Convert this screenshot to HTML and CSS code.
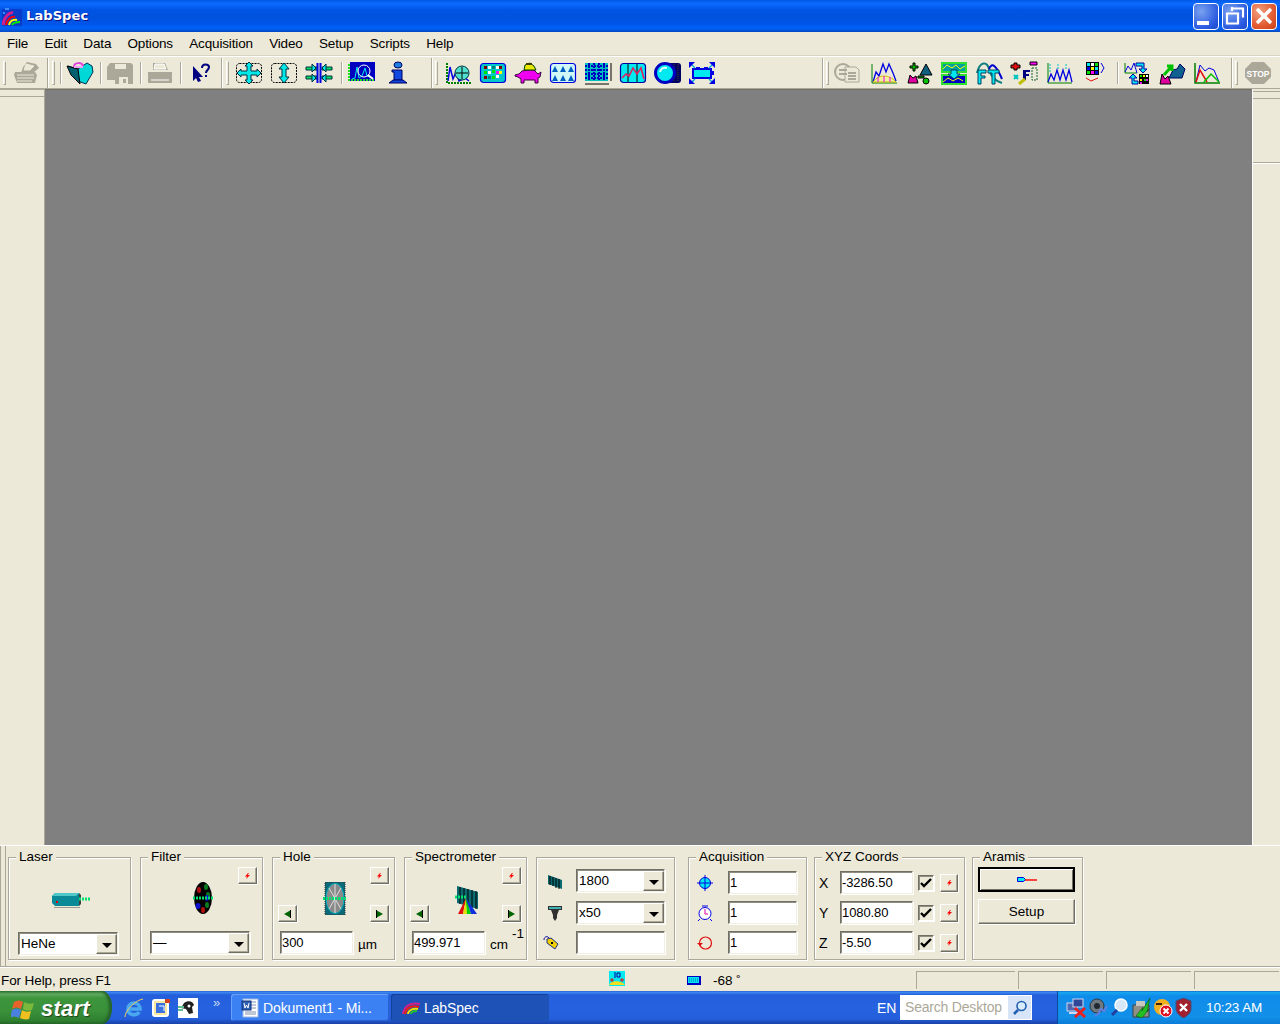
FILE: index.html
```html
<!DOCTYPE html>
<html lang="en">
<head>
<meta charset="utf-8">
<title>LabSpec</title>
<link rel="stylesheet" href="styles.css">
</head>
<body>
<svg class="defs" width="0" height="0" aria-hidden="true">
  <symbol id="bolt" viewBox="0 0 5 6"><path d="M3 0h1L2.500 2H5L1 6l1-2.500H0z" fill="#f00"/></symbol>
  <symbol id="tri-l" viewBox="0 0 7 8"><path d="M7 0v8L0 4z" fill="#006400"/><path d="M6.500 0v8" stroke="#000" fill="none"/></symbol>
  <symbol id="tri-r" viewBox="0 0 7 8"><path d="M0 0v8l7-4z" fill="#006400"/><path d="M.5 0v8" stroke="#000" fill="none"/></symbol>
</svg>

<header class="titlebar">
  <svg class="app-icon" width="20" height="18" viewBox="0 0 20 18"><rect x="0" y="1" width="20" height="17" fill="#0a3cc8"/><path d="M3 1h4M1 5h2" stroke="#3c8cff" stroke-width="2"/><path d="M1 17C2 8 8 4 11 5" stroke="#d02090" stroke-width="3" fill="none"/><path d="M4 17C5 11 10 8 13 9" stroke="#f00" stroke-width="2" fill="none"/><path d="M7 17C8 13 11 11 15 12" stroke="#ff0" stroke-width="2" fill="none"/><path d="M10 17c1-2 3-3 8-3" stroke="#0e0" stroke-width="2" fill="none"/></svg>
  <span class="app-title">LabSpec</span>
  <div class="win-buttons">
    <div class="win-btn"><span class="g-min"></span></div>
    <div class="win-btn"><svg width="20" height="20" viewBox="0 0 20 20" fill="none" stroke="#fff"><path d="M7 2.500h11v9M7 1v4M2 7.500h11v10H2z" stroke-width="2.200"/></svg></div>
    <div class="win-btn win-close"><svg width="18" height="18" viewBox="0 0 18 18"><path d="M2 2l14 14M16 2L2 16" stroke="#fff" stroke-width="3.400"/></svg></div>
  </div>
</header>

<nav class="menubar">
  <span>File</span><span>Edit</span><span>Data</span><span>Options</span><span>Acquisition</span><span>Video</span><span>Setup</span><span>Scripts</span><span>Help</span>
</nav>

<div class="toolbar">
  <i class="grip ml3"></i>
  <svg class="ti ml6" viewBox="0 0 28 24"><path d="M15 1l9 2 3 4-6 5H9l2-6z" fill="#aca899"/><path d="M3 11h20l2 3-2 8H5l-3-8z" fill="#aca899"/><path d="M14 3l8 2-4 4h-6zM5 14h17M5 17h17M5 20h15" stroke="#ece9d8" fill="#ece9d8"/></svg>
  <i class="bandend ml7"></i><i class="grip ml4"></i><i class="sep ml5"></i>
  <svg class="ti ml5" viewBox="0 0 28 24"><path d="M2 5l10 3 9-6 5 3 1 6-7 12-8-3z" fill="#00d8d8" stroke="#003050"/><path d="M1 5l4 9 9 9-2-15z" fill="#006070" stroke="#000"/><path d="M8 6c0-5 8-5 9-1" stroke="#e040e0" stroke-width="2" fill="none"/><path d="M8 6h9" stroke="#f0a0f0" stroke-width="2"/></svg>
  <i class="sep ml6"></i>
  <svg class="ti ml5" viewBox="0 0 28 24"><path d="M4 2h21l2 2v19H9v-4H1V6z" fill="#aca899"/><path d="M9 3h11v5H9z" fill="#ece9d8"/><path d="M13 16h9v7h-9z" fill="#ece9d8"/><path d="M17 18h3v4h-3z" fill="#aca899"/></svg>
  <i class="sep ml6"></i>
  <svg class="ti ml5" viewBox="0 0 28 24"><path d="M7 2h12l3 7h-15zM2 11h24v11H2z" fill="#aca899"/><path d="M9 3h9l2 5H8zM5 19h18" stroke="#fff" fill="#ece9d8"/></svg>
  <i class="sep ml6"></i>
  <svg class="ti ml6" viewBox="0 0 28 24"><path d="M6 5v15l3-3 2 4 3-1-2-4h4z" fill="#000080"/><path d="M15 7c0-5 7-4 7-1 0 3-3 3-3 6M19 14v2" stroke="#000080" stroke-width="2" fill="none"/></svg>
  <i class="bandend ml6"></i><i class="grip ml4"></i>
  <svg class="ti ml6" viewBox="0 0 28 24"><rect x="1.500" y="2.500" width="25" height="19" rx="3" fill="none" stroke="#000" stroke-dasharray="2 1"/><path d="M14 1l4 4h-2v5h6V8l4 4-4 4v-2h-6v5h2l-4 4-4-4h2v-5H6v2l-4-4 4-4v2h6V5h-2z" fill="#00e8e8" stroke="#003040"/></svg>
  <svg class="ti ml7" viewBox="0 0 28 24"><rect x="1.500" y="2.500" width="25" height="19" rx="3" fill="none" stroke="#000" stroke-dasharray="2 1"/><path d="M14 2l5 6h-3v8h3l-5 6-5-6h3V8H9z" fill="#00e8e8" stroke="#003040"/></svg>
  <svg class="ti ml7" viewBox="0 0 28 24"><path d="M1 6h11v3H1zM17 6h10v3H17zM1 15h11v3H1zM17 15h10v3H17z" fill="#00e060" stroke="#003040"/><path d="M12.500 2v20M15.500 2v20" stroke="#0000e0" stroke-width="2"/><path d="M21 3l-4 4 4 4zM7 3l4 4-4 4zM21 13l-4 4 4 4zM7 13l4 4-4 4z" fill="#00e8e8" stroke="#003040"/></svg>
  <i class="sep ml8"></i>
  <svg class="ti ml6" viewBox="0 0 28 24"><rect x="2" y="1" width="25" height="19" fill="#0000c0"/><path d="M0 19h27M1 3v17" stroke="#20e020" stroke-width="2" stroke-dasharray="2 1"/><path d="M4 18l3-1 2-11 2 11 3-2 3-8 2 8 6 2" stroke="#00e8e8" fill="none"/><circle cx="16" cy="10" r="6" fill="none" stroke="#fff"/><path d="M20 14l5 4" stroke="#fff" stroke-width="2"/></svg>
  <svg class="ti ml8" viewBox="0 0 28 24"><ellipse cx="14" cy="4" rx="4" ry="3" fill="#2080e0" stroke="#000060"/><path d="M8 9h10v10h-8v-8H8z" fill="#1048e0" stroke="#000060"/><path d="M5 22l4-3h10l4 3z" fill="#1048e0" stroke="#000060"/></svg>
  <i class="bandend ml19"></i><i class="grip ml3"></i>
  <svg class="ti ml6" viewBox="0 0 28 24"><path d="M3 2v20h24" stroke="#008000" stroke-width="2" fill="none" stroke-dasharray="2 1"/><path d="M4 20l2-14 3 12 3-7 3 9 6-3 4 3" stroke="#0000e0" fill="none" stroke-width="1.500"/><circle cx="18" cy="12" r="7" fill="#50e0d0" stroke="#003040"/><path d="M18 6v12M12 12h12" stroke="#000"/></svg>
  <svg class="ti ml7" viewBox="0 0 28 24"><rect x="1.500" y="2.500" width="25" height="19" rx="3" fill="#00c8c8" stroke="#0000e0" stroke-width="1.200"/><path d="M5 5h3v3H5zM20 5h3v3h-3zM5 15h3v3H5z" fill="#800000"/><path d="M9 5h3v3H9zM9 10h3v3H9zM17 14h3v3h-3zM17 5h3v3h-3z" fill="#fff"/><path d="M13 9h3v3h-3zM5 10h3v3H5zM13 15h3v3h-3z" fill="#00e000"/><path d="M13 5h3v3h-3zM9 15h3v3H9z" fill="#008080"/><path d="M17 10h3v3h-3z" fill="#ff00ff"/><path d="M20 10h3v3h-3z" fill="#ff0"/></svg>
  <svg class="ti ml7" viewBox="0 0 28 24"><path d="M1 14l4-1 3-3 6-1 6 0 4 4 3-2-1 5-2 1v5h-3v-3H10v3H7v-4l-3-2-3-1z" fill="#f000f0" stroke="#400040"/><path d="M10 9l1-5 5-2 4 3 2 4z" fill="#e8e800" stroke="#004000"/><path d="M12 3h6" stroke="#404000" stroke-width="2"/></svg>
  <svg class="ti ml7" viewBox="0 0 28 24"><rect x="1.500" y="2.500" width="25" height="19" rx="3" fill="#d0f8f8" stroke="#0000e0" stroke-width="1.200"/><path d="M3 11l3-6 3 6zM11 11l3-6 3 6zM19 11l3-6 3 6zM3 20l3-6 3 6zM11 20l3-6 3 6zM19 20l3-6 3 6z" fill="#0060c0"/></svg>
  <svg class="ti ml7" viewBox="0 0 28 24"><rect x="1" y="2" width="23" height="18" fill="#00c0c0"/><path d="M1 5h23M1 9h23M1 13h23M1 17h23M5 2v18M10 2v18M15 2v18M20 2v18" stroke="#0000c0" stroke-width="2" stroke-dasharray="2 1"/><path d="M27 2v18M1 23h24" stroke="#000"/></svg>
  <svg class="ti ml7" viewBox="0 0 28 24"><rect x="1.500" y="2.500" width="25" height="19" rx="3" fill="#00e8f0" stroke="#0000a0" stroke-width="1.200"/><path d="M9 3v18M18 3v18" stroke="#000"/><path d="M3 17l4-4 3 2 4-8 4 6 4-6 3 11" fill="none" stroke="#e02060" stroke-width="1.600"/></svg>
  <svg class="ti ml7" viewBox="0 0 28 24"><rect x="12" y="2" width="15" height="20" rx="3" fill="#000060"/><path d="M16 3v18M20 3v18M24 3v18" stroke="#404040" stroke-dasharray="1 1"/><circle cx="11" cy="12" r="9.500" fill="#00e8f0" stroke="#0000c0" stroke-width="3"/><path d="M6 11c1-4 4-5 7-4" stroke="#e0ffff" stroke-width="2" fill="none"/></svg>
  <svg class="ti ml6" viewBox="0 0 28 24"><path d="M5 8h18v9H5z" fill="#00e8f0" stroke="#0000e0" stroke-width="2"/><path d="M8 6h4v3H8zM16 6h4v3h-4zM23 10h3v4h-3z" fill="#0000e0"/><path d="M7 7L3 3M21 7l4-4M7 18l-4 4M21 18l4 4" stroke="#00b0d0" stroke-width="1.400"/><path d="M1 1h6L1 7zM27 1h-6l6 6zM1 23h6l-6-6zM27 23h-6l6-6z" fill="#0000e0"/></svg>
  <i class="bandend ml106"></i><i class="grip ml3"></i>
  <svg class="ti ml4" viewBox="0 0 28 24"><circle cx="10" cy="11" r="8" fill="#ece9d8" stroke="#aca899" stroke-width="2"/><path d="M12 6h11l3 3v12H12z" fill="#ece9d8" stroke="#aca899"/><path d="M6 9h8M6 13h8M15 12h8M15 15h8M15 18h8" stroke="#aca899" stroke-width="2"/></svg>
  <svg class="ti ml9" viewBox="0 0 28 24"><path d="M2 3v19h25" stroke="#008000" fill="none"/><path d="M3 21l3-10 3 4 4-12 3 8 3-8 4 9 3 8" stroke="#0000e0" fill="none" stroke-width="1.300"/><path d="M3 21c6-8 16-8 23 0z" fill="#f0f0a0" stroke="#d0c000"/><path d="M8 16v5M14 15v6M20 16v5" stroke="#f000f0"/></svg>
  <svg class="ti ml7" viewBox="0 0 28 24"><path d="M3 22l2-8 3 3 3-2 2 7z" fill="#e000a0" stroke="#000"/><path d="M15 14l6-11 6 11z" fill="#106080" stroke="#000"/><path d="M8 2h2v3h3v2h-3v3H8V7H5V5h3z" fill="#00c000" stroke="#000"/><path d="M13 15h6v2h-6z" fill="#00a000" stroke="#000"/><circle cx="21" cy="20" r="3" fill="#00c000" stroke="#000"/></svg>
  <svg class="ti ml7" viewBox="0 0 28 24"><rect x="2" y="2" width="24" height="9" fill="#00a0a0" stroke="#30e030" stroke-width="2"/><rect x="2" y="14" width="24" height="9" fill="#0000c0" stroke="#30e030" stroke-width="2"/><path d="M3 8l4-4 5 3 4-3 4 4 5-3M3 21l5-4 5 3 5-3 5 3" stroke="#ff0" fill="none"/><path d="M11 9h6v4h3l-6 5-6-5h3z" fill="#00e8f0" stroke="#004060"/></svg>
  <svg class="ti ml7" viewBox="0 0 28 24"><path d="M2 12C5 0 12 0 14 8s6 12 13 14" stroke="#108080" stroke-width="2" fill="none"/><path d="M14 8C17 0 22 6 27 18" stroke="#0000d0" stroke-width="2" fill="none"/><path d="M3 9h8v3H6v3h4v2H6v6H3zM13 9h11v3h-4v11h-3V12h-4z" fill="#00e8f0" stroke="#004060"/></svg>
  <svg class="ti ml7" viewBox="0 0 28 24"><path d="M4 2h3v2h3v3H7v2H4V7H1V4h3z" fill="#e01010" stroke="#000"/><path d="M20 1h7v3h-7z" fill="#ff00ff" stroke="#000"/><path d="M13 9h7v2h-4v2h3v2h-3v4h-3z" fill="#000080"/><path d="M4 14l4 4m0-4l-4 4" stroke="#00c0c0" stroke-width="2"/><path d="M22 7h5v12h-5z" fill="none" stroke="#106030" stroke-dasharray="2 1"/><path d="M9 23l6-5" stroke="#c0c000" stroke-width="3"/></svg>
  <svg class="ti ml7" viewBox="0 0 28 24"><path d="M3 2v20h24" stroke="#008000" fill="none"/><path d="M3 21l3-8 3 6 3-10 3 10 3-10 3 10 3-10 3 12" stroke="#0000e0" fill="none" stroke-width="1.300"/><path d="M5 3v8M13 3v5M21 3v5" stroke="#00c0c0" stroke-dasharray="2 1"/></svg>
  <svg class="ti ml7" viewBox="0 0 28 24"><rect x="6" y="1" width="13" height="13" fill="#000"/><path d="M7 2h3v3H7zM15 6h3v3h-3z" fill="#00e8f0"/><path d="M11 2h3v3h-3z" fill="#fff"/><path d="M15 2h3v3h-3zM7 10h3v3H7z" fill="#00e000"/><path d="M11 6h3v3h-3z" fill="#ff0"/><path d="M7 6h3v3H7zM15 10h3v3h-3z" fill="#0000e0"/><path d="M11 10h3v3h-3z" fill="#ff00ff"/><path d="M21 2l3 5-3 5" stroke="#0000e0" fill="none"/><path d="M6 17l5 3 7-3" stroke="#e01010" fill="none"/></svg>
  <i class="sep ml9"></i>
  <svg class="ti ml5" viewBox="0 0 28 24"><path d="M2 2v10h12" stroke="#008000" fill="none"/><path d="M2 11l3-6 3 4 3-7 3 10" stroke="#0000e0" fill="none"/><path d="M13 2h8v6h3l-4 4-4-4h3V5h-6z" fill="#00e8f0" stroke="#0000a0"/><path d="M9 23v-6H6l4-4 4 4h-3v3h4v3z" fill="#00e8f0" stroke="#0000a0"/><rect x="16" y="13" width="10" height="10" fill="#000"/><path d="M17 14h2v2h-2zM21 18h2v2h-2z" fill="#00e000"/><path d="M20 14h2v2h-2zM17 18h2v2h-2z" fill="#ff0"/><path d="M23 14h2v2h-2z" fill="#fff"/><path d="M17 21h2v2h-2zM23 18h2v2h-2z" fill="#e020e0"/></svg>
  <svg class="ti ml7" viewBox="0 0 28 24"><path d="M2 23l2-10 3 5 3-3 3 8z" fill="#e000a0" stroke="#000"/><path d="M11 17l4-8 4-1 3-5 5 5-3 9z" fill="#106090" stroke="#000060"/><path d="M6 14l7-8M9 5h5v5" stroke="#00c000" stroke-width="3" fill="none"/></svg>
  <svg class="ti ml7" viewBox="0 0 28 24"><path d="M2 2v20h25" stroke="#008000" stroke-width="1.500" fill="none"/><path d="M3 21L7 4l5 6 4-3 5 2 5 12" stroke="#0000e0" fill="none"/><path d="M3 21l4-12 7 12" stroke="#e01010" fill="none" stroke-width="1.500"/><path d="M11 21l7-8 8 8" stroke="#00c000" fill="none" stroke-width="1.500"/></svg>
  <i class="bandend ml10"></i><i class="grip ml3"></i>
  <svg class="ti ml6" viewBox="0 0 28 24"><path d="M8 1h12l7 7v8l-7 7H8l-7-7V8z" fill="#aca899"/><text x="14" y="15.500" class="stop-text">STOP</text></svg>
</div>

<main class="workspace">
  <aside class="dock dock-left"></aside>
  <section class="canvas"></section>
  <aside class="dock dock-right"><div class="dock-divider"></div></aside>
</main>

<section class="panel">
  <div class="group g-laser">
    <span class="legend">Laser</span>
    <div class="icon-row">
      <svg width="40" height="18" viewBox="0 0 40 18"><path d="M1 5l3-3h24v13H4l-3-3z" fill="#0a8a96"/><path d="M1 5l3-3h24l-3 3z" fill="#50c8c8"/><path d="M4 15h24l2-2v-9l-2-2v13z" fill="#404040"/><path d="M3 16h26v1H3z" fill="#9c9a90"/><rect x="5" y="10" width="2" height="2" fill="#e00000"/><path d="M28 8h12" stroke="#00e070" stroke-width="3" stroke-dasharray="2 1"/></svg>
    </div>
    <div class="select"><span class="value">HeNe</span><span class="drop"></span></div>
  </div>

  <div class="group optic g-filter">
    <span class="legend">Filter</span>
    <span class="slot-l"></span>
    <button class="btn-sq slot-top"><svg class="bolt"><use href="#bolt"/></svg></button>
    <svg class="optic-icon" width="20" height="34" viewBox="0 0 20 34"><ellipse cx="10" cy="17" rx="9" ry="16" fill="#000"/><ellipse cx="6" cy="9" rx="2" ry="3" fill="#b01010"/><ellipse cx="13" cy="6" rx="2" ry="3" fill="#0a7a20"/><ellipse cx="15" cy="14" rx="2" ry="3" fill="#0a7a20"/><ellipse cx="5" cy="25" rx="2.500" ry="3" fill="#1010d0"/><ellipse cx="14" cy="24" rx="2" ry="3" fill="#0a7a20"/><ellipse cx="10" cy="29" rx="2" ry="3" fill="#b01010"/><ellipse cx="14" cy="17" rx="2" ry="3" fill="#1010d0"/><path d="M0 17h20" stroke="#00e070" stroke-width="3" stroke-dasharray="2 1"/></svg>
    <div class="select row-bottom"><span class="value">—</span><span class="drop"></span></div>
  </div>

  <div class="group optic g-hole">
    <span class="legend">Hole</span>
    <button class="btn-sq slot-top"><svg class="bolt"><use href="#bolt"/></svg></button>
    <button class="btn-sq slot-l"><svg class="tri"><use href="#tri-l"/></svg></button>
    <svg class="optic-icon" width="24" height="33" viewBox="0 0 24 33"><rect x="2" y="0" width="20" height="33" fill="#0c6a78"/><path d="M2 0h20v33H2z" fill="none" stroke="#303030" stroke-dasharray="1 1"/><ellipse cx="12" cy="16.500" rx="9" ry="15" fill="#8a8a8a" stroke="#00b0c0"/><path d="M12 2v29M6 6l12 21M18 6L6 27" stroke="#e0e0e0"/><path d="M0 16.500h24" stroke="#00e070" stroke-width="3" stroke-dasharray="2 1"/></svg>
    <button class="btn-sq slot-r"><svg class="tri"><use href="#tri-r"/></svg></button>
    <div class="entry-row row-bottom"><div class="field w73">300</div><span class="unit">µm</span></div>
  </div>

  <div class="group optic g-spec">
    <span class="legend">Spectrometer</span>
    <button class="btn-sq slot-top"><svg class="bolt"><use href="#bolt"/></svg></button>
    <button class="btn-sq slot-l"><svg class="tri"><use href="#tri-l"/></svg></button>
    <svg class="optic-icon" width="24" height="30" viewBox="0 0 24 30"><path d="M2 1l21 6v17L2 18z" fill="#0a6a70"/><path d="M5 2v17M9 3v17M13 4v18M17 5v18M21 6v18" stroke="#000"/><path d="M0 12h12" stroke="#00e070" stroke-width="3" stroke-dasharray="2 1"/><path d="M11 13L3 29h5z" fill="#e01010"/><path d="M11 13L8 29h4z" fill="#e0e000"/><path d="M11 13l1 16h4z" fill="#00d000"/><path d="M11 13l5 16h6z" fill="#1030e0"/></svg>
    <button class="btn-sq slot-r"><svg class="tri"><use href="#tri-r"/></svg></button>
    <div class="entry-row row-bottom"><div class="field w73">499.971</div><span class="unit unit-cm">cm</span><span class="sup">-1</span></div>
  </div>

  <div class="group rows g-instr">
    <div class="row-a">
      <svg class="row-icon" width="16" height="16" viewBox="0 0 16 16"><path d="M1 2l14 5v9L1 11z" fill="#0a6a70"/><path d="M3 3v9M6 4v9M9 5v10M12 6v10" stroke="#000"/></svg>
      <div class="select w89"><span class="value">1800</span><span class="drop"></span></div>
    </div>
    <div class="row-b">
      <svg class="row-icon" width="16" height="16" viewBox="0 0 16 16"><path d="M1 1h14v4h-3l-2 5v3l-2 3-2-3v-3L4 5H1z" fill="#303030"/><path d="M2 2h12v2H2z" fill="#40b0b0"/></svg>
      <div class="select w89"><span class="value">x50</span><span class="drop"></span></div>
    </div>
    <div class="row-c">
      <svg class="row-icon" width="16" height="16" viewBox="0 0 16 16"><path d="M4 4l4-1 7 6-3 5-8-6z" fill="#f0d000" stroke="#203080"/><path d="M1 5c0-4 4-4 5-2" fill="none" stroke="#0000a0"/><rect x="8" y="7" width="2" height="2" fill="#000"/></svg>
      <div class="field w89"></div>
    </div>
  </div>

  <div class="group rows g-acq">
    <span class="legend">Acquisition</span>
    <div class="row-a">
      <svg class="row-icon" width="16" height="16" viewBox="0 0 16 16"><circle cx="8" cy="8" r="5.500" fill="#00e8f0" stroke="#0000e0"/><path d="M8 0v16M0 8h16" stroke="#0000e0"/></svg>
      <div class="field w69">1</div>
    </div>
    <div class="row-b">
      <svg class="row-icon" width="16" height="16" viewBox="0 0 16 16"><circle cx="8" cy="8.500" r="6" fill="#fff" stroke="#0000e0"/><path d="M8 4v5h3" stroke="#e000a0" fill="none"/><path d="M5 1h6M3 14l-2 2M13 14l2 2" stroke="#0000e0"/></svg>
      <div class="field w69">1</div>
    </div>
    <div class="row-c">
      <svg class="row-icon" width="16" height="16" viewBox="0 0 16 16"><circle cx="8.500" cy="8" r="6" fill="none" stroke="#e01010" stroke-width="1.200"/><path d="M0 8h6l-3 3z" fill="#e01010"/></svg>
      <div class="field w69">1</div>
    </div>
  </div>

  <div class="group rows g-xyz">
    <span class="legend">XYZ Coords</span>
    <div class="row-a"><span class="axis">X</span><div class="field w73">-3286.50</div><span class="check"><svg width="12" height="12" viewBox="0 0 12 12"><path d="M1 6l3 3 7-7" stroke="#000" stroke-width="2.400" fill="none"/></svg></span><button class="btn-sq"><svg class="bolt"><use href="#bolt"/></svg></button></div>
    <div class="row-b"><span class="axis">Y</span><div class="field w73">1080.80</div><span class="check"><svg width="12" height="12" viewBox="0 0 12 12"><path d="M1 6l3 3 7-7" stroke="#000" stroke-width="2.400" fill="none"/></svg></span><button class="btn-sq"><svg class="bolt"><use href="#bolt"/></svg></button></div>
    <div class="row-c"><span class="axis">Z</span><div class="field w73">-5.50</div><span class="check"><svg width="12" height="12" viewBox="0 0 12 12"><path d="M1 6l3 3 7-7" stroke="#000" stroke-width="2.400" fill="none"/></svg></span><button class="btn-sq"><svg class="bolt"><use href="#bolt"/></svg></button></div>
  </div>

  <div class="group g-aramis">
    <span class="legend">Aramis</span>
    <button class="btn-wide btn-default"><svg width="20" height="6" viewBox="0 0 20 6"><path d="M.5.500h6l2 2-2 2h-6z" fill="#00e8f0" stroke="#0000e0"/><path d="M8 3h12" stroke="#f00" stroke-width="1.400"/></svg></button>
    <button class="btn-wide">Setup</button>
  </div>
</section>

<footer class="statusbar">
  <span class="help-text">For Help, press F1</span>
  <svg class="st-icon" width="16" height="15" viewBox="0 0 16 15"><rect width="16" height="15" fill="#00e8f0"/><path d="M0 14c2-5 12-5 16 0z" fill="#f0e020"/><path d="M3 7v4M1 9h4M13 7v4M11 9h4" stroke="#e01010"/><path d="M6 1v6M8 2h3v4H8z" stroke="#0000a0" fill="none"/></svg>
  <svg class="st-key" width="14" height="9" viewBox="0 0 14 9"><rect width="14" height="9" fill="#0000c0"/><rect x="1" y="1" width="11" height="6" fill="#00e8f0"/><path d="M2 3h9M2 5h9" stroke="#0060c0" stroke-dasharray="1 1"/></svg>
  <span class="angle">-68 ˚</span>
  <span class="pane p1"></span><span class="pane p2"></span><span class="pane p2"></span><span class="pane p3"></span>
</footer>

<div class="taskbar">
  <div class="start">
    <svg width="25" height="24" viewBox="0 0 25 24"><path d="M3 5c3-2 6-2 9 0l-2 7c-3-2-6-2-9 0z" fill="#e8622c"/><path d="M13 5c3 2 6 2 10 1l-2 7c-3 1-7 1-9-1z" fill="#7cb83c"/><path d="M1 13c3-2 6-2 9 0l-2 8c-3-2-6-2-9 0z" fill="#4a80e0"/><path d="M11 13c3 2 6 2 9 1l-2 8c-3 1-7 0-9-1z" fill="#f0c020"/></svg>
    <span class="start-text">start</span>
  </div>
  <div class="quick">
    <svg width="20" height="20" viewBox="0 0 20 20"><path d="M4 11h12c0-8-12-8-12 0 0 7 9 7 11 3" fill="none" stroke="#4aa8f0" stroke-width="3.600"/><path d="M1 19C1 12 12 2 19 1" fill="none" stroke="#f0d060"/></svg>
    <svg width="20" height="20" viewBox="0 0 20 20"><rect x="2" y="2" width="15" height="16" rx="2" fill="#f8e8a0" stroke="#fff" stroke-width="2"/><rect x="5" y="5" width="9" height="10" fill="#3a70e0"/><path d="M8 8h5v5" stroke="#fff" fill="none"/><path d="M14 1h5v4h-5z" fill="#d04020"/></svg>
    <svg width="20" height="20" viewBox="0 0 20 20"><rect width="20" height="20" fill="#fff"/><path d="M6 5c4-3 9-2 10 2l-2 2 1 6-4 1-3-5-5-1z" fill="#202020"/><path d="M0 9h6M0 12h5" stroke="#60c090" stroke-width="2"/><circle cx="11" cy="8" r="1.500" fill="#fff"/></svg>
    <span class="chev">»</span>
  </div>
  <div class="task">
    <svg width="20" height="20" viewBox="0 0 20 20"><rect x="2" y="1" width="15" height="18" fill="#fff" stroke="#9cb8e0"/><path d="M9 4h6M9 7h6M9 10h6M4 14h11M4 16h11" stroke="#8090b0"/><rect x="1" y="3" width="9" height="9" fill="#3060b0" stroke="#103080"/><path d="M3 5l1 5 1.500-3L7 10l1-5" stroke="#fff" fill="none"/></svg>
    <span>Dokument1 - Mi...</span>
  </div>
  <div class="task task-active">
    <svg width="20" height="14" viewBox="0 0 20 14"><path d="M1 13C2 5 8 1 18 3" stroke="#d02090" stroke-width="2" fill="none"/><path d="M3 13C4 7 9 4 17 6" stroke="#f02010" stroke-width="2" fill="none"/><path d="M6 13C6 10 10 7 16 8" stroke="#f0e000" stroke-width="2" fill="none"/><path d="M9 13c0-2 3-3 6-3" stroke="#20c030" stroke-width="2" fill="none"/></svg>
    <span>LabSpec</span>
  </div>
  <span class="lang">EN</span>
  <div class="search"><span>Search Desktop</span></div>
  <div class="search-go"><svg width="18" height="18" viewBox="0 0 18 18"><circle cx="10.500" cy="7" r="4.500" fill="#d8ecff" stroke="#2060b0" stroke-width="1.600"/><path d="M7 11l-4 4" stroke="#2060b0" stroke-width="2.600"/></svg></div>
  <div class="tray">
    <svg width="21" height="20" viewBox="0 0 21 20"><rect x="1" y="5" width="10" height="8" fill="#5068b0" stroke="#d0d8f0"/><rect x="7" y="1" width="10" height="8" fill="#304898" stroke="#d0d8f0"/><path d="M3 15h9" stroke="#d0d8f0" stroke-width="2"/><path d="M9 10l10 9m0-9L9 19" stroke="#e82020" stroke-width="3"/></svg>
    <svg width="19" height="20" viewBox="0 0 19 20"><circle cx="8" cy="8" r="7" fill="#707880" stroke="#303840"/><circle cx="8" cy="8" r="3" fill="#202830"/><path d="M6 18l4-3 2-4 3 2 3-5" stroke="#6080e0" stroke-width="2" fill="none"/></svg>
    <svg width="19" height="20" viewBox="0 0 19 20"><circle cx="11" cy="7" r="6" fill="#d8e8f8" stroke="#f8fcff" stroke-width="1.600"/><path d="M7 12l-5 5" stroke="#2040a0" stroke-width="3"/></svg>
    <svg width="20" height="20" viewBox="0 0 20 20"><path d="M2 7h16v12H2z" fill="#909088" stroke="#404040"/><path d="M5 3h9v5H5z" fill="#c8c8c0"/><path d="M5 18L12 9l-1 4 8-13-3 14 2-3-7 9z" fill="#20c020" stroke="#004000" stroke-width=".5"/></svg>
    <svg width="20" height="20" viewBox="0 0 20 20"><circle cx="9" cy="9" r="8" fill="#f0b020"/><circle cx="13" cy="13" r="6" fill="#e01020" stroke="#fff"/><path d="M10.500 10.500l5 5m0-5l-5 5" stroke="#fff" stroke-width="2"/><path d="M3 6h6" stroke="#402000" stroke-width="2"/></svg>
    <svg width="17" height="20" viewBox="0 0 17 20"><path d="M8.500 0L16 3v8c0 4-4 7-7.500 9C5 18 1 15 1 11V3z" fill="#a02030" stroke="#405080"/><path d="M5 6l7 7m0-7l-7 7" stroke="#fff" stroke-width="2.400"/></svg>
    <span class="clock">10:23 AM</span>
  </div>
</div>
</body>
</html>
```
FILE: styles.css
```css
* { box-sizing: border-box; }
html, body { margin: 0; padding: 0; }
body {
  width: 1280px; height: 1024px; overflow: hidden;
  background: #ece9d8; color: #000;
  font: 13.5px/16px "Liberation Sans", Arial, sans-serif;
  display: flex; flex-direction: column;
}
.defs { position: absolute; }

/* title bar */
.titlebar {
  flex: 0 0 32px; display: flex; align-items: center; padding-left: 2px; color: #fff;
  background: linear-gradient(#0058e6 0, #0a63f0 2px, #0a6aff 4px, #0054e3 10px, #0052de 18px, #0055ea 24px, #0062f8 28px, #0258e0 30px, #0048c0 32px);
}
.app-icon { margin-right: 4px; margin-top: 1px; }
.app-title { font: bold 13px/16px "DejaVu Sans", sans-serif; letter-spacing: .1px; text-shadow: 1px 1px #0f1089; }
.win-buttons { margin-left: auto; display: flex; gap: 3px; padding-right: 3px; }
.win-btn {
  width: 26px; height: 27px; border: 1px solid #fff; border-radius: 4px;
  background: radial-gradient(circle at 30% 30%, #7aa2f0, #2a5ae0 70%, #1c49c8);
  display: flex; align-items: center; justify-content: center;
}
.g-min { width: 12px; height: 4px; background: #fff; margin: 14px 6px 0 0; }
.win-close { background: radial-gradient(circle at 30% 30%, #f0a080, #e25a30 60%, #c8401c); }

/* menu */
.menubar { flex: 0 0 24px; display: flex; gap: 16.250px; padding: 4px 0 0 7px; letter-spacing: -.15px; }

/* toolbar */
.toolbar {
  flex: 0 0 33px; display: flex; align-items: center;
  border-top: 1px solid #fff; border-bottom: 1px solid #aca899; background: #ece9d8;
  box-shadow: 0 -1px #d8d4c0;
}
.ti { width: 28px; height: 24px; flex: none; }
.grip { width: 3px; height: 24px; flex: none; border: 1px solid; border-color: #fff #aca899 #aca899 #fff; }
.sep { width: 1px; height: 22px; flex: none; background: #aca899; box-shadow: 1px 0 #fff; }
.bandend { width: 1px; height: 30px; flex: none; background: #aca899; box-shadow: 1px 0 #fff; }
.stop-text { font: bold 8.500px "Liberation Sans", sans-serif; fill: #fff; text-anchor: middle; }
.ml3 { margin-left: 3px; } .ml4 { margin-left: 4px; } .ml5 { margin-left: 5px; } .ml6 { margin-left: 6px; }
.ml7 { margin-left: 7px; } .ml8 { margin-left: 8px; } .ml9 { margin-left: 9px; } .ml10 { margin-left: 10px; }
.ml19 { margin-left: 19px; } .ml106 { margin-left: 106px; }

/* workspace */
.workspace { flex: 0 0 757px; display: flex; border-bottom: 1px solid #fff; }
.dock { background: #ece9d8; }
.dock-left { flex: 0 0 45px; border-right: 1px solid #aca899; }
.dock-left::before, .dock-right::before {
  content: ""; display: block; height: 6px;
  border-top: 1px solid #aca899; border-bottom: 1px solid #aca899;
}
.dock-right::before { margin-top: 2px; }
.canvas { flex: 0 0 1207px; background: #808080; border-top: 1px solid #716f64; }
.dock-right { flex: 0 0 28px; border-left: 1px solid #fff; }
.dock-divider { margin-top: 63px; height: 2px; border-top: 1px solid #aca899; border-bottom: 1px solid #fff; }

/* instrument panel */
.panel {
  flex: 0 0 121px; display: flex; align-items: flex-start; padding: 11px 0 0 8px; position: relative;
  border-bottom: 1px solid #aca899;
}
.panel::before {
  content: ""; position: absolute; left: 0; top: 0; bottom: 0; width: 4px;
  border-left: 1px solid #aca899; border-right: 1px solid #aca899;
}
.group {
  position: relative; flex: none; height: 103px; margin-right: 9px;
  border: 1px solid #aca899; box-shadow: 1px 1px #fff, inset 1px 1px #fff;
}
.legend { position: absolute; left: 7px; top: -9px; padding: 0 3px; background: #ece9d8; white-space: nowrap; }

.g-laser { width: 123px; display: flex; flex-direction: column; align-items: flex-start; padding: 33px 0 0 9px; }
.icon-row { height: 41px; margin-left: 33px; }
.g-filter, .g-hole, .g-spec { width: 123px; }

.optic {
  display: grid;
  grid-template-columns: 19px 73px 19px;
  grid-template-rows: 17px 21px 17px 9px 23px;
  padding: 9px 5px 0 5px;
}
.slot-top { grid-column: 3; grid-row: 1; }
.slot-l { grid-column: 1; grid-row: 3; }
.slot-r { grid-column: 3; grid-row: 3; }
.optic-icon { grid-column: 2; grid-row: 1 / 4; justify-self: center; align-self: end; margin: 0 0 7px 2px; }
.g-hole .optic-icon { margin-left: 3px; }
.row-bottom { grid-column: 1 / -1; grid-row: 5; }
.g-filter .select { margin-left: 4px; }
.entry-row { display: flex; align-items: flex-start; padding-left: 2px; position: relative; }
.unit { margin: 6px 0 0 5px; }
.sup { margin: -5px 0 0 4px; }

.rows { display: grid; align-content: start; padding-top: 13px; row-gap: 7px; }
.rows > div { display: flex; align-items: center; height: 23px; }
.row-icon { flex: none; }
.g-instr { width: 139px; margin-right: 13px; padding-top: 11px; row-gap: 0; }
.g-instr .row-a { padding-left: 10px; }
.g-instr .row-b { padding-left: 10px; margin-top: 9px; }
.g-instr .row-c { padding-left: 6px; margin-top: 7px; }
.g-instr .row-icon { margin-right: 13px; }
.g-instr .row-c .row-icon { margin-right: 17px; }
.g-acq { width: 119px; margin-right: 7px; padding-left: 8px; }
.g-acq .row-icon { margin-right: 15px; }
.g-xyz { width: 151px; margin-right: 7px; padding-left: 4px; }
.axis { width: 21px; flex: none; padding-top: 1px; font-size: 14px; }
.g-xyz .check { margin: 0 6px 0 5px; }
.g-aramis { width: 111px; display: flex; flex-direction: column; gap: 7px; padding: 9px 0 0 5px; margin-right: 0; }

.field {
  flex: none; height: 23px; background: #fff; padding: 3px 0 0 1px; line-height: 16px; font-size: 13px; letter-spacing: -.1px;
  border: 1px solid; border-color: #716f64 #f1efe2 #f1efe2 #716f64;
  box-shadow: inset 1px 1px #908e82, 1px 1px #fff;
}
.w73 { width: 73px; } .w69 { width: 69px; } .w89 { width: 89px; }
.select {
  flex: none; width: 100px; height: 23px; display: flex; background: #fff;
  border: 1px solid; border-color: #716f64 #f1efe2 #f1efe2 #716f64;
  box-shadow: inset 1px 1px #908e82, 1px 1px #fff; padding: 1px 0 0 1px;
}
.select.w89 { width: 89px; }
.value { flex: 1; padding: 2px 0 0 1px; }
.drop {
  flex: 0 0 21px; background: #ece9d8; position: relative;
  border: 1px solid; border-color: #fff #716f64 #716f64 #fff;
  box-shadow: inset -1px -1px #aca899;
}
.drop::after {
  content: ""; position: absolute; left: 5px; top: 8px;
  border: 5px solid transparent; border-top: 5px solid #000; border-bottom: 0;
}
.btn-sq {
  width: 19px; height: 17px; padding: 0; display: flex; align-items: center; justify-content: center;
  background: #ece9d8; flex: none;
  border: 1px solid; border-color: #fff #716f64 #716f64 #fff;
  box-shadow: inset -1px -1px #aca899, 1px 1px #fff;
}
.g-xyz .btn-sq { width: 18px; height: 18px; }
.bolt { width: 5px; height: 6px; }
.tri { width: 7px; height: 8px; }
.check {
  width: 16px; height: 16px; background: #ece9d8; flex: none; display: flex; align-items: center; justify-content: center;
  border: 1px solid; border-color: #716f64 #fff #fff #716f64; box-shadow: inset 1px 1px #908e82, 1px 1px #fff;
}
.btn-wide {
  width: 97px; height: 25px; padding: 0; background: #ece9d8; color: #000;
  font: 13.5px/16px "Liberation Sans", Arial, sans-serif;
  border: 1px solid; border-color: #fff #716f64 #716f64 #fff;
  box-shadow: inset -1px -1px #aca899, 1px 1px #fff;
  display: flex; align-items: center; justify-content: center;
}
.btn-default { border: 2px solid #000; box-shadow: inset 1px 1px #fff, inset -1px -1px #716f64; }

/* status */
.statusbar { flex: 0 0 24px; display: flex; align-items: flex-start; border-top: 1px solid #fff; position: relative; }
.help-text { width: 609px; padding: 5px 0 0 1px; flex: none; letter-spacing: -.1px; }
.st-icon { margin-top: 3px; flex: none; }
.st-key { margin: 8px 0 0 62px; flex: none; }
.angle { margin: 5px 0 0 12px; width: 203px; flex: none; }
.pane { height: 18px; margin-top: 3px; flex: none; border-top: 1px solid #aca899; border-left: 1px solid #aca899; margin-right: 3px; }
.p1 { width: 99px; } .p2 { width: 85px; } .p3 { width: 85px; margin-right: 0; }

/* taskbar */
.taskbar {
  flex: 1; display: flex; align-items: center; color: #fff;
  background: linear-gradient(#1f52c5 0, #3f8cf3 1px, #245edb 4px, #2663e0 50%, #245edb 28px, #1941a5 33px);
  font-size: 14px; letter-spacing: -.1px;
}
.start {
  width: 112px; height: 100%; flex: none; display: flex; align-items: center; padding: 2px 0 0 11px; gap: 5px;
  border-radius: 0 10px 10px 0 / 0 16px 16px 0;
  background: linear-gradient(#2f7d34 0, #60a860 3px, #3c963c 7px, #3a913a 60%, #2f8030 90%, #256a28);
  box-shadow: inset -3px 0 3px #24602a;
}
.start-text { font: italic bold 22px/24px "Liberation Sans", sans-serif; text-shadow: 1px 1px 1px #204020; letter-spacing: .2px; }
.quick { flex: none; width: 119px; display: flex; align-items: center; gap: 7px; padding-left: 12px; }
.chev { margin: -10px 0 0 8px; font-size: 13px; color: #c8d8f8; }
.task {
  flex: none; width: 158px; height: 27px; margin-right: 2px; display: flex; align-items: center; gap: 2px; padding-left: 10px;
  background: #3c81f3; border-radius: 3px; box-shadow: inset 1px 1px #6aa0f8, inset -1px -1px #2a60d0;
}
.task-active { background: #1e52b7; box-shadow: inset 1px 1px #15409a; padding-left: 11px; }
.lang { margin-left: 326px; width: 23px; flex: none; }
.search { width: 107px; height: 25px; flex: none; background: #fff; color: #aca899; padding: 4px 0 0 5px; line-height: 16px; letter-spacing: -.2px; }
.search-go { width: 25px; height: 25px; flex: none; background: #d8e4f8; border: 1px solid #fff; display: flex; align-items: center; justify-content: center; }
.tray {
  margin-left: 25px; flex: 1; height: 100%; display: flex; align-items: center; gap: 2px; padding-left: 8px;
  border-left: 1px solid #0c4aa0; font-size: 13.5px;
  background: linear-gradient(#0c59b9 0, #18a8f0 1px, #0f8cea 5px, #1290e8 26px, #0b7cd8);
}
.clock { margin-left: 12px; }
```
